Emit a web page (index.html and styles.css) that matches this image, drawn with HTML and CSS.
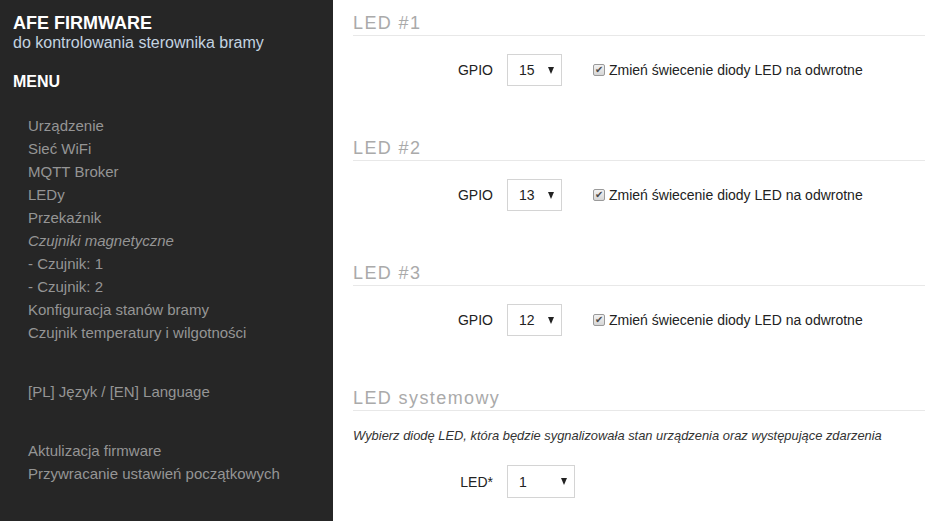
FILE: index.html
```html
<!DOCTYPE html>
<html lang="pl">
<head>
    <meta charset="UTF-8">
    <meta name="viewport" content="width=device-width, initial-scale=1.0">
    <title>AFE Firmware - LEDy</title>
    <link rel="stylesheet" href="styles.css">
</head>
<body>
    <div class="sidebar">
        <div class="brand">AFE FIRMWARE</div>
        <div class="brand-sub">do kontrolowania sterownika bramy</div>
        <div class="menu-title">MENU</div>
        <ul class="menu">
            <li>Urządzenie</li>
            <li>Sieć WiFi</li>
            <li>MQTT Broker</li>
            <li>LEDy</li>
            <li>Przekaźnik</li>
            <li class="italic">Czujniki magnetyczne</li>
            <li>- Czujnik: 1</li>
            <li>- Czujnik: 2</li>
            <li>Konfiguracja stanów bramy</li>
            <li>Czujnik temperatury i wilgotności</li>
        </ul>
        <ul class="menu">
            <li>[PL] Język / [EN] Language</li>
        </ul>
        <ul class="menu">
            <li>Aktulizacja firmware</li>
            <li>Przywracanie ustawień początkowych</li>
        </ul>
    </div>

    <div class="main">
        <!-- LED 1 -->
        <div class="section">
            <h2>LED #1</h2>
            <div class="row">
                <label class="row-label">GPIO</label>
                <span class="select-wrap">
                    <select class="select"><option>15</option></select>
                </span>
                <span class="check-label"><span class="check">&#10004;</span>Zmień świecenie diody LED na odwrotne</span>
            </div>
        </div>

        <!-- LED 2 -->
        <div class="section">
            <h2>LED #2</h2>
            <div class="row">
                <label class="row-label">GPIO</label>
                <span class="select-wrap">
                    <select class="select"><option>13</option></select>
                </span>
                <span class="check-label"><span class="check">&#10004;</span>Zmień świecenie diody LED na odwrotne</span>
            </div>
        </div>

        <!-- LED 3 -->
        <div class="section">
            <h2>LED #3</h2>
            <div class="row">
                <label class="row-label">GPIO</label>
                <span class="select-wrap">
                    <select class="select"><option>12</option></select>
                </span>
                <span class="check-label"><span class="check">&#10004;</span>Zmień świecenie diody LED na odwrotne</span>
            </div>
        </div>

        <!-- LED systemowy -->
        <div class="section">
            <h2>LED systemowy</h2>
            <p class="hint">Wybierz diodę LED, która będzie sygnalizowała stan urządzenia oraz występujące zdarzenia</p>
            <div class="row">
                <label class="row-label">LED*</label>
                <span class="select-wrap wide">
                    <select class="select"><option>1</option></select>
                </span>
            </div>
        </div>
    </div>
</body>
</html>
```

FILE: styles.css
```css
body {
    font-family: "Liberation Sans", Arial, sans-serif;
    margin: 0;
    padding: 0;
    display: flex;
    height: 100vh;
    overflow: hidden;
    background: white;
    color: #222;
}
.sidebar {
    width: 333px;
    flex-shrink: 0;
    background-color: #262626;
    padding: 13px 0 0 13px;
    box-sizing: border-box;
}
.brand {
    color: white;
    font-weight: bold;
    font-size: 18px;
    line-height: 20px;
}
.brand-sub {
    color: #c3d3e0;
    font-size: 16px;
    line-height: 20px;
}
.menu-title {
    color: white;
    font-weight: bold;
    font-size: 16px;
    line-height: 20px;
    margin-top: 19px;
}
.menu {
    list-style: none;
    margin: 22px 0 0 0;
    padding: 0 0 0 15px;
    font-size: 15px;
    line-height: 23px;
    color: #959595;
}
.menu + .menu {
    margin-top: 36px;
}
.menu .italic {
    font-style: italic;
}
.main {
    flex: 1;
    padding: 13px 0 0 20px;
}
.section {
    margin-bottom: 52px;
}
.section:last-child {
    margin-bottom: 0;
}
.section h2 {
    margin: 0;
    font-size: 18px;
    line-height: 21px;
    font-weight: normal;
    letter-spacing: 1.4px;
    color: #aaaaaa;
    padding-bottom: 1px;
    border-bottom: 1px solid #e8e8e8;
}
.row {
    display: flex;
    align-items: center;
    margin-top: 18px;
    font-size: 14px;
}
.row-label {
    width: 140px;
    text-align: right;
    margin-right: 14px;
}
.select-wrap {
    position: relative;
    display: inline-block;
    width: 55px;
    height: 32px;
}
.select-wrap.wide {
    width: 68px;
    height: 33px;
}
.select-wrap::after {
    content: "";
    position: absolute;
    right: 8px;
    top: 13px;
    border-left: 3px solid transparent;
    border-right: 3px solid transparent;
    border-top: 7px solid #222;
    pointer-events: none;
}
.select {
    -webkit-appearance: none;
    appearance: none;
    width: 100%;
    height: 100%;
    box-sizing: border-box;
    border: 1px solid #d4d4d4;
    border-radius: 0;
    background: white;
    font-family: "Liberation Sans", Arial, sans-serif;
    font-size: 14px;
    color: #222;
    padding: 0 0 0 11px;
    margin: 0;
}
.check-label {
    display: inline-flex;
    align-items: center;
    margin-left: 31px;
}
.check {
    display: inline-block;
    width: 12px;
    height: 12px;
    box-sizing: border-box;
    border: 1px solid #9a9a9a;
    border-radius: 2px;
    background: linear-gradient(#f2f2f2, #d6d6d6);
    color: #4a4a4a;
    font-size: 10px;
    line-height: 10px;
    text-align: center;
    margin-right: 4px;
}
.hint {
    margin: 17px 0 0 0;
    font-size: 12.9px;
    line-height: 16px;
    font-style: italic;
    color: #333;
}
.hint + .row {
    margin-top: 21px;
}
```
